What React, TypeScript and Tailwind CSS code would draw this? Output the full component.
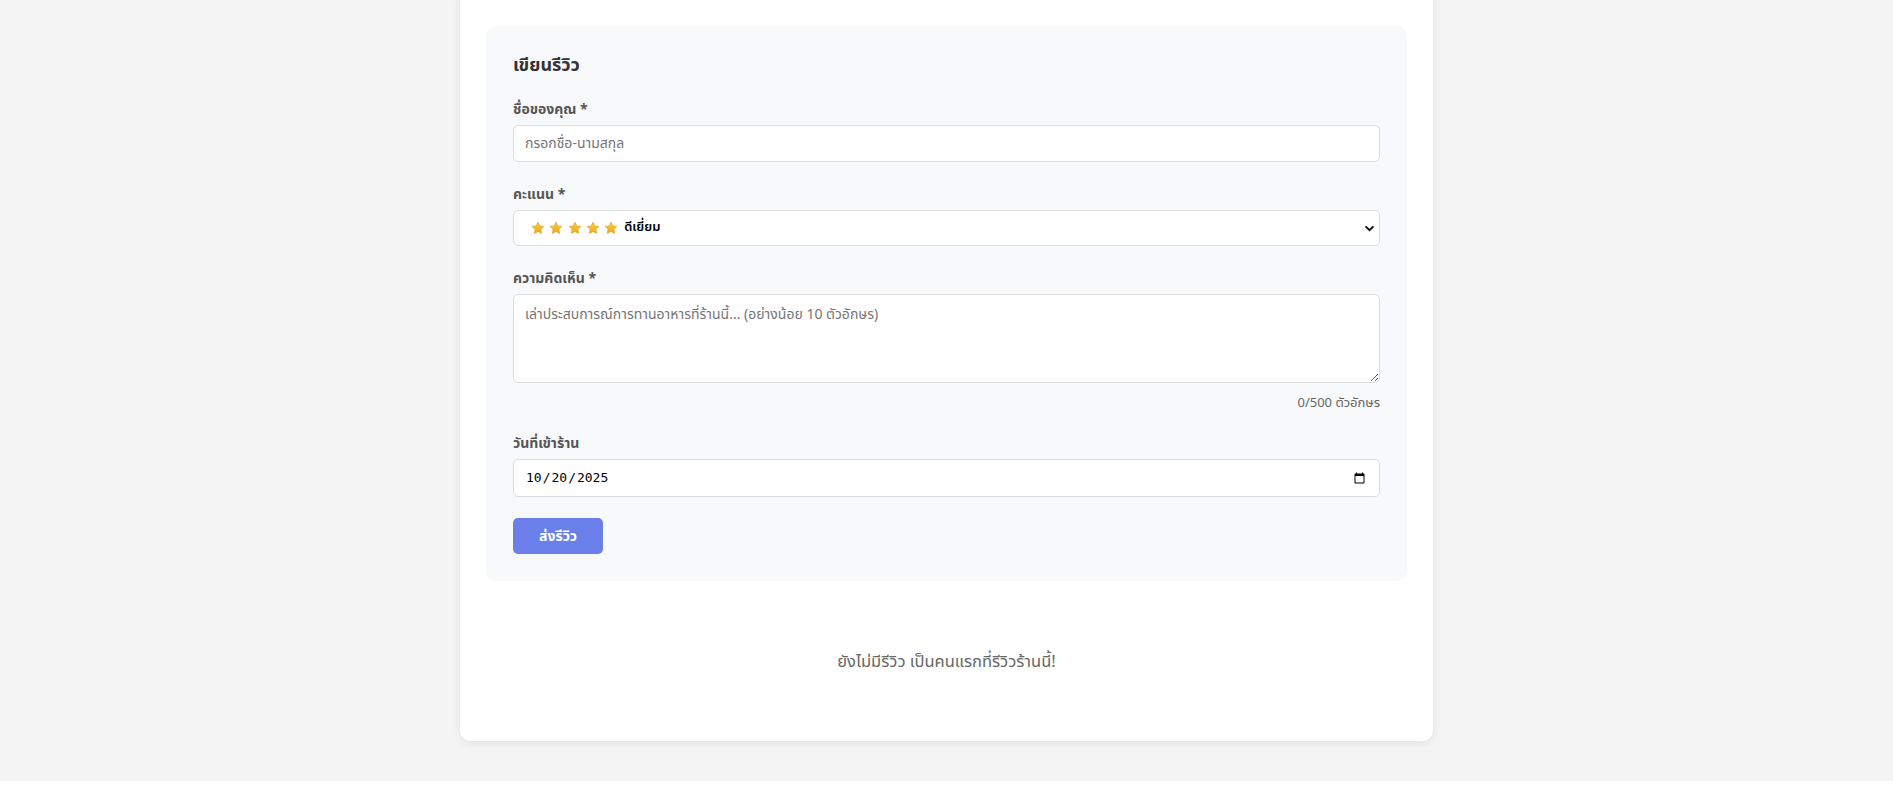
import { useState } from "react";

function Star() {
  return (
    <svg viewBox="0 0 24 24" className="w-[14px] h-[14px]">
      <defs>
        <linearGradient id="starFill" x1="0" y1="0" x2="0" y2="1">
          <stop offset="0%" stopColor="#f7cf45" />
          <stop offset="100%" stopColor="#e9a91d" />
        </linearGradient>
      </defs>
      <path
        d="M12 1.8l3.1 6.6 7.1.9-5.2 5 1.3 7.1L12 18l-6.3 3.4 1.3-7.1-5.2-5 7.1-.9z"
        fill="url(#starFill)"
        stroke="#d99a12"
        strokeWidth="1"
        strokeLinejoin="round"
      />
    </svg>
  );
}

function App() {
  const [comment, setComment] = useState("");

  return (
    <div
      className="min-h-screen bg-[#f4f4f4] pb-10"
      style={{ fontFamily: 'Tahoma, "Noto Sans Thai", "Noto Sans", "DejaVu Sans", sans-serif' }}
    >
      {/* card - top is scrolled out of view */}
      <div className="mx-auto w-[973px] -mt-[12px] pt-[38px] px-[26px] pb-[26px] bg-white rounded-[10px] shadow-[0_2px_10px_rgba(0,0,0,0.08)]">
        {/* review form */}
        <div className="bg-[#f8f9fa] rounded-[10px] px-[27px] pt-[26px] pb-[27px]">
          <h3 className="text-[18px] leading-[27px] font-bold text-[#333] mb-[20px]">เขียนรีวิว</h3>

          <div className="mb-[22px]">
            <label className="block text-[14px] leading-[21px] font-bold text-[#555] mb-[5px]">ชื่อของคุณ *</label>
            <input
              type="text"
              placeholder="กรอกชื่อ-นามสกุล"
              className="block w-full h-[37px] px-[11px] bg-white border border-[#ddd] rounded-[5px] text-[14px] text-[#333] placeholder:text-[#757575] outline-none"
            />
          </div>

          <div className="mb-[22px]">
            <label className="block text-[14px] leading-[21px] font-bold text-[#555] mb-[5px]">คะแนน *</label>
            {/* select look-alike */}
            <div className="flex items-center h-[36px] pl-[17px] pr-[4px] bg-white border border-[#ddd] rounded-[5px]">
              <div className="flex items-center gap-[4.3px]">
                <Star />
                <Star />
                <Star />
                <Star />
                <Star />
              </div>
              <span className="ml-[6px] text-[13px] text-black font-semibold">ดีเยี่ยม</span>
              <svg viewBox="0 0 12 8" className="ml-auto w-[11px] h-[7px]">
                <path d="M1.5 1.5L6 6l4.5-4.5" fill="none" stroke="#111" strokeWidth="2.2" />
              </svg>
            </div>
          </div>

          <div className="mb-[20px]">
            <label className="block text-[14px] leading-[21px] font-bold text-[#555] mb-[5px]">ความคิดเห็น *</label>
            <textarea
              value={comment}
              onChange={(e) => setComment(e.target.value)}
              placeholder="เล่าประสบการณ์การทานอาหารที่ร้านนี้... (อย่างน้อย 10 ตัวอักษร)"
              className="block w-full h-[89px] px-[11px] py-[9px] bg-white border border-[#ddd] rounded-[5px] text-[14px] text-[#333] placeholder:text-[#757575] outline-none"
            />
            <div className="mt-[10px] text-right text-[13px] leading-[20px] text-[#666]">{comment.length}/500 ตัวอักษร</div>
          </div>

          <div className="mb-[21px]">
            <label className="block text-[14px] leading-[21px] font-bold text-[#555] mb-[5px]">วันที่เข้าร้าน</label>
            <input
              type="date"
              defaultValue="2025-10-20"
              className="block w-full h-[38px] px-[11px] bg-white border border-[#ddd] rounded-[5px] text-[13px] text-black outline-none"
              style={{ fontFamily: '"DejaVu Sans Mono", monospace' }}
            />
          </div>

          <button className="w-[90px] h-[36px] rounded-[5px] bg-[#6a7fea] text-white text-[14px] font-bold">ส่งรีวิว</button>
        </div>

        {/* empty state */}
        <div className="mt-[28px] py-[40px] text-center text-[16.5px] leading-[26px] text-[#666]">
          ยังไม่มีรีวิว เป็นคนแรกที่รีวิวร้านนี้!
        </div>
      </div>
    </div>
  );
}

export default App;
